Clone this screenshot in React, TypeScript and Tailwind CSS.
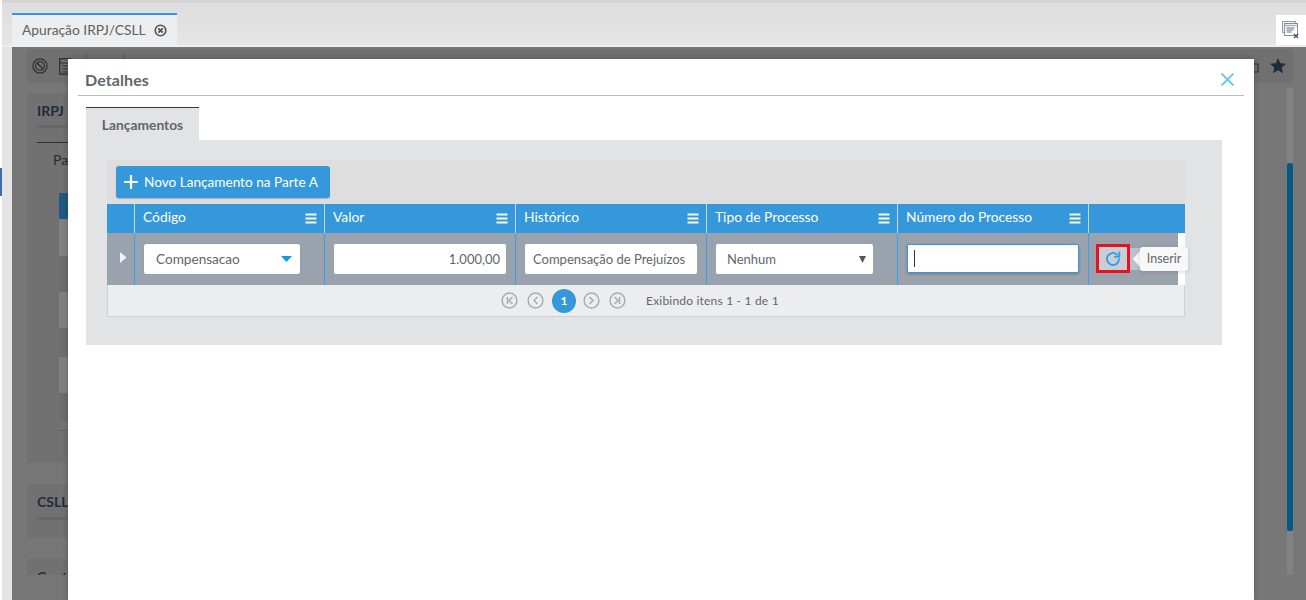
import React from "react";

const F = { fontFamily: "Lato, sans-serif" };

function Menu() {
  return (
    <svg width="12" height="11" viewBox="0 0 12 11" className="shrink-0">
      <rect x="0.5" y="0.5" width="11" height="2" fill="#f4f8fb" />
      <rect x="0.5" y="4.5" width="11" height="2" fill="#f4f8fb" />
      <rect x="0.5" y="8.5" width="11" height="2" fill="#f4f8fb" />
    </svg>
  );
}

function Head({ w, label }: { w: string; label?: string }) {
  return (
    <div className={`${w} shrink-0 h-full border-r border-[#c9d6df] flex items-center justify-between pl-[8px] pr-[7px] text-white text-[13.8px]`}>
      <span className="-mt-[3px]">{label}</span>
      {label ? <Menu /> : null}
    </div>
  );
}

function Cell({ w, children }: { w: string; children?: React.ReactNode }) {
  return (
    <div className={`${w} shrink-0 h-full border-r border-[#2ea3ee] flex items-center pl-[9px]`}>{children}</div>
  );
}

function PageCircle({ d }: { d: string }) {
  return (
    <svg width="17" height="17" viewBox="0 0 17 17">
      <circle cx="8.5" cy="8.5" r="7.4" fill="none" stroke="#a9acaf" strokeWidth="1.5" />
      <path d={d} fill="none" stroke="#a9acaf" strokeWidth="1.5" />
    </svg>
  );
}

export default function App() {
  return (
    <div style={F} className="relative w-[1306px] h-[600px] overflow-hidden bg-white flex">
      <div className="w-[2px] shrink-0 flex flex-col">
        <div className="h-[168px]" />
        <div className="h-[28px] bg-[#3f6cae]" />
      </div>
      <div className="flex-1 flex flex-col min-w-0 bg-[#e4e4e4]">
        <div className="h-[3px] shrink-0 bg-[#d4d4d4]" />
        <div className="h-[42px] shrink-0 flex justify-between bg-gradient-to-b from-[#dedede] to-[#e5e5e5] pl-[10px]">
          <div className="mt-[10px] w-[165px] h-[32px] border-t-[2px] border-[#3498db] bg-[#eceef0] flex items-center pl-[10px] gap-[8px] text-[13.8px] text-[#5f5f5f]">
            <span>Apuração IRPJ/CSLL</span>
            <svg width="13" height="13" viewBox="0 0 13 13">
              <circle cx="6.5" cy="6.5" r="5.3" fill="none" stroke="#555" strokeWidth="1.6" />
              <path d="M4.3 4.3l4.4 4.4M8.7 4.3l-4.4 4.4" stroke="#555" strokeWidth="1.8" />
            </svg>
          </div>
          <div className="mt-[12px] w-[30px] h-[30px] bg-white flex items-center justify-center">
            <svg width="18" height="18" viewBox="0 0 18 18" fill="none">
              <rect x="0.5" y="0.5" width="13" height="11" fill="#f0f3f8" stroke="#8d9bc0" />
              <rect x="2.5" y="2.5" width="13" height="12" fill="#fff" stroke="#7d8fa8" />
              <path d="M2.5 4.5h13" stroke="#c4a59a" strokeWidth="1.5" />
              <path d="M4.5 7h8M4.5 9h7M4.5 11h5" stroke="#5d6f86" />
              <path d="M12 13l4 4M16 13l-4 4" stroke="#3f4f63" strokeWidth="1.3" />
            </svg>
          </div>
        </div>
        <div className="h-[2px] shrink-0 bg-[#eeeeee]" />
        <div className="flex-1 ml-[10px] bg-[#777777] px-[15px] pr-[13px] flex flex-col">
          <div className="mt-[2px] h-[34px] shrink-0 bg-[#707070] flex items-center justify-between pl-[5px] pr-[7px]">
            <div className="flex items-center">
              <svg width="16" height="16" viewBox="0 0 17 17" fill="none">
                <circle cx="8.5" cy="8.5" r="7.5" stroke="#2c3136" strokeWidth="1.3" />
                <circle cx="8.5" cy="8.5" r="4.7" stroke="#2c3136" strokeWidth="1.2" />
                <path d="M5 5l7 7" stroke="#2c3136" strokeWidth="1.5" />
              </svg>
              <svg width="13" height="17" viewBox="0 0 13 17" fill="none" className="ml-[11px]">
                <rect x="0.7" y="0.7" width="11" height="15.5" stroke="#2c3136" strokeWidth="1.3" />
                <path d="M1 5h11M3 8h8M3 11h8M3 14h8" stroke="#2c3136" />
              </svg>
              <div className="ml-[14px] w-[1px] h-[24px] bg-[#555555]" />
              <div className="ml-[37px] w-[1px] h-[24px] bg-[#555555]" />
            </div>
            <div className="flex items-center gap-[11px]">
              <svg width="6" height="14" viewBox="0 0 6 14" fill="none"><path d="M0 5h5v8H0M0 5V1" stroke="#2c3136" strokeWidth="1.2" /></svg>
              <svg width="16" height="16" viewBox="0 0 16 16"><path d="M8 0l2.3 5.3 5.700.5-4.300 3.800 1.300 5.700L8 12.300l-5 3 1.300-5.700L0 5.800l5.700-.5z" fill="#1d2b3a" /></svg>
            </div>
          </div>
          <div className="mt-[10px] w-[1200px] h-[370px] shrink-0 bg-[#707170] pt-[8px] pl-[10px] flex flex-col">
            <div className="text-[14px] font-bold text-[#1f2c3c] leading-[20px]">IRPJ</div>
            <div className="mt-[4px] h-[3px] bg-[#686868]" />
            <div className="mt-[14px] h-[1px] bg-[#27313c]" />
            <div className="mt-[7px] pl-[16px] text-[14px] text-[#2b2b2b] leading-[20px]">Pa</div>
            <div className="mt-[23px] ml-[22px] w-[40px] flex flex-col">
              <div className="h-[26px] bg-[#1f5a82]" />
              <div className="h-[37px] bg-[#808180]" />
              <div className="h-[36px] bg-[#6d6e6d]" />
              <div className="h-[36px] bg-[#7f807f]" />
              <div className="h-[29px] bg-[#6d6e6d]" />
              <div className="h-[36px] bg-[#7f807f]" />
              <div className="h-[28px] bg-[#6d6e6d]" />
              <div className="h-[10px] bg-[#747574] border-b border-[#626262]" />
            </div>
          </div>
          <div className="mt-[21px] w-[1200px] h-[54px] shrink-0 bg-[#707170] pl-[10px] pt-[8px]">
            <div className="text-[14px] font-bold text-[#1f2c3c] leading-[20px]">CSLL</div>
            <div className="mt-[5px] h-[3px] bg-[#686868]" />
          </div>
          <div className="mt-[21px] w-[1200px] h-[16px] shrink-0 bg-[#707170] pl-[10px] overflow-hidden">
            <div className="text-[14px] font-bold text-[#1f2c3c] leading-[20px] mt-[8px]">Contr</div>
          </div>
        </div>
      </div>

      {/* scrollbar of the page behind the dialog */}
      <div className="absolute left-[1287px] top-[88px] w-[6px] h-[487px] bg-[#828282]">
        <div className="mt-[75px] h-[368px] rounded-[2px] bg-[#025a85]" />
      </div>

      {/* dialog */}
      <div className="absolute left-[68px] top-[59px] w-[1186px] h-[541px] bg-white shadow-[0_0_6px_rgba(0,0,0,0.25)] pl-[10px] pr-[10px] flex flex-col">
        <div className="h-[37px] shrink-0 border-b border-[#b8bcc0] flex items-center justify-between pl-[7px] pr-[10px]">
          <span className="text-[16px] font-bold text-[#62666b] tracking-[0.1px] mt-[6px]">Detalhes</span>
          <svg width="13" height="13" viewBox="0 0 13 13" className="mt-[4px]"><path d="M0.500 0.500l12 12M12.500 0.500l-12 12" stroke="#5cc3f5" strokeWidth="1.700" /></svg>
        </div>
        <div className="mt-[11px] ml-[8px] w-[113px] h-[33px] shrink-0 border-t border-[#2f3b4c] bg-[#e1e3e5] flex items-center justify-center text-[13.8px] font-bold text-[#62666b] pt-[3px]">
          Lançamentos
        </div>
        <div className="ml-[8px] mr-[22px] h-[205px] shrink-0 bg-[#e1e3e5] pl-[21px] pr-[37px] pt-[20px]">
          <div className="h-[44px] bg-[#dedede] pl-[9px] pt-[6px]">
            <div className="w-[214px] h-[32px] rounded-[3px] bg-[#3498db] shadow-[0_1px_1px_rgba(0,0,0,0.2)] flex items-center pl-[8px] gap-[6px] text-white text-[13.6px]">
              <svg width="14" height="14" viewBox="0 0 14 14"><path d="M7 0v14M0 7h14" stroke="#fff" strokeWidth="2.200" /></svg>
              <span>Novo Lançamento na Parte A</span>
            </div>
          </div>
          <div className="h-[29px] bg-[#3498db] flex">
            <Head w="w-[28px]" />
            <Head w="w-[190px]" label="Código" />
            <Head w="w-[191px]" label="Valor" />
            <Head w="w-[191px]" label="Histórico" />
            <Head w="w-[191px]" label="Tipo de Processo" />
            <Head w="w-[191px]" label="Número do Processo" />
          </div>
          <div className="h-[52px] bg-[#9aa3ad] flex relative">
            <div className="w-[28px] shrink-0 h-full border-r border-[#2ea3ee] flex justify-center pt-[19px]">
              <svg width="7" height="11" viewBox="0 0 7 11" className="ml-[5px]"><path d="M0 0l6.500 5.500L0 11z" fill="#f0f4f8" /></svg>
            </div>
            <Cell w="w-[190px]">
              <div className="w-[156px] h-[30px] rounded-[2px] bg-white shadow-[0_0_1px_rgba(0,0,0,0.3)] flex items-center justify-between pl-[12px] pr-[8px] text-[13.6px] text-[#62666b]">
                <span>Compensacao</span>
                <svg width="11" height="6" viewBox="0 0 11 6"><path d="M0 0h11L5.500 6z" fill="#0f9ae8" /></svg>
              </div>
            </Cell>
            <Cell w="w-[191px]">
              <div className="w-[172px] h-[30px] pt-[1px] rounded-[2px] bg-white flex items-center justify-end pr-[6px] text-[13px] text-[#62666b]">1.000,00</div>
            </Cell>
            <Cell w="w-[191px]">
              <div className="w-[172px] h-[30px] pt-[1px] rounded-[2px] bg-white flex items-center pl-[8px] text-[13px] text-[#62666b] whitespace-nowrap overflow-hidden">Compensação de Prejuízos</div>
            </Cell>
            <Cell w="w-[191px]">
              <div className="w-[157px] h-[30px] pt-[1px] rounded-[2px] bg-white flex items-center justify-between pl-[11px] pr-[7px] text-[13px] text-[#62666b]">
                <span>Nenhum</span>
                <svg width="7" height="7" viewBox="0 0 7 7"><path d="M0 0h7L3.500 7z" fill="#555" /></svg>
              </div>
            </Cell>
            <Cell w="w-[191px]">
              <div className="w-[172px] h-[29px] -mt-[1px] rounded-[2px] bg-white border border-[#3498db] shadow-[0_1px_3px_rgba(0,0,0,0.25)] flex items-center pl-[6px]">
                <div className="w-[1px] h-[17px] bg-[#333]" />
              </div>
            </Cell>
            <div className="flex-1 flex items-center pl-[7px] justify-between">
              <div className="w-[34px] h-[29px] -mt-[1px] border-[3px] border-[#e81123] bg-[#c9ced4] flex items-center justify-center">
                <svg width="16" height="16" viewBox="0 0 24 24" fill="none" stroke="#2e9be8" strokeWidth="2.600" strokeLinecap="square">
                  <path d="M21 12a9 9 0 1 1-3-6.700" />
                  <path d="M21.500 2v6.500H15" />
                </svg>
              </div>
              <div className="w-[7px] h-full bg-white" />
            </div>
            <div className="absolute left-[1023px] top-[15px] h-[22px] pl-[3px] bg-[#c9ced4]/70 flex items-center">
              <div className="w-0 h-0 border-y-[8px] border-y-transparent border-r-[7px] border-r-[#f8f8f8]" />
              <div className="w-[48px] h-[24px] rounded-[3px] bg-[#f8f8f8] shadow-[0_1px_4px_rgba(0,0,0,0.15)] flex items-center justify-center text-[12.5px] text-[#62666b]">Inserir</div>
            </div>
          </div>
          <div className="h-[32px] bg-[#ecedef] border border-t-0 border-[#cfd1d3] flex items-center pl-[393px] text-[12px] text-[#62666b]">
            <div className="flex items-center gap-[9px]">
              <PageCircle d="M6.500 5v7M11.500 5L8 8.500l3.500 3.500" />
              <PageCircle d="M10.500 5L7 8.500l3.500 3.500" />
              <div className="w-[24px] h-[24px] rounded-full bg-[#3498db] flex items-center justify-center text-white text-[12px] font-bold -ml-[1px] -mr-[2px]">1</div>
              <PageCircle d="M6.500 5L10 8.500 6.500 12" />
              <PageCircle d="M5.500 5L9 8.500 5.500 12M10.500 5v7" />
            </div>
            <span className="ml-[20px] tracking-[0.2px]">Exibindo itens 1 - 1 de 1</span>
          </div>
        </div>
      </div>
    </div>
  );
}
